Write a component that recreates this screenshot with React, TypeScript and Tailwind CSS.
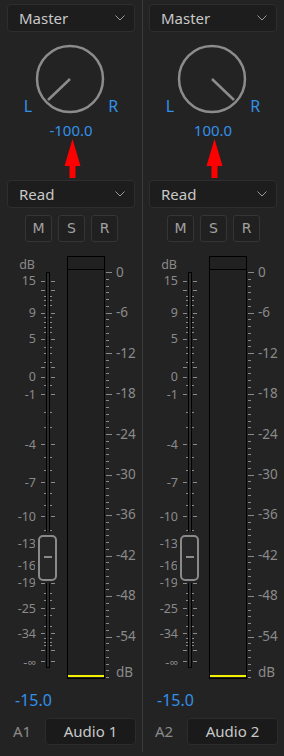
// Audio mixer strip — two channels side by side (Master / Read / meter / fader)

const FONT = { fontFamily: '"Noto Sans", "Open Sans", sans-serif' };

const LEFT_LABELS: [string, number][] = [
  ["15", 285], ["9", 317], ["5", 343], ["0", 381], ["-1", 399], ["-4", 449],
  ["-7", 487], ["-10", 521], ["-13", 548], ["-16", 570], ["-19", 587],
  ["-25", 613], ["-34", 638], ["-∞", 667],
];

const LEFT_LONG = [281, 290, 313, 339, 367, 377, 394, 444, 482, 516, 543, 566, 583, 608, 633, 650, 661];
const LEFT_SHORT = [
  296, 300, 305, 317, 322, 327, 332, 347, 353, 362, 385, 412, 427, 457, 470, 493,
  505, 530, 593, 600, 615, 626, 638, 642, 645,
];

const RIGHT_LABELS = ["0", "-6", "-12", "-18", "-24", "-30", "-36", "-42", "-48", "-54"];

type ChannelProps = {
  pan: string;
  panRight: boolean;
  volume: string;
  id: string;
  name: string;
  divider?: boolean;
};

function Chevron() {
  return (
    <svg width="10" height="6" viewBox="0 0 10 6" className="block">
      <polyline points="0.5,0.5 5,5 9.5,0.5" fill="none" stroke="#9a9a9a" strokeWidth="1" />
    </svg>
  );
}

function Dropdown({ label, className = "" }: { label: string; className?: string }) {
  return (
    <div
      className={`mx-[7px] flex h-[28px] items-center justify-between rounded-[4px] border border-[#2e2e2e] bg-[#1d1d1d] pl-[11px] pr-[9px] text-[15px] text-[#c8c8c8] ${className}`}
    >
      <span className="leading-none">{label}</span>
      <Chevron />
    </div>
  );
}

function Knob({ right }: { right: boolean }) {
  return (
    <div className="mt-[12px] flex items-end justify-center gap-[3px]">
      <span className="text-[16px] leading-[16px] text-[#3290ea]">L</span>
      <svg width="70" height="70" viewBox="0 0 70 70" className="block">
        <circle cx="35" cy="35" r="33" fill="none" stroke="#8c8c8c" strokeWidth="2.5" />
        <line
          x1="35"
          y1="35"
          x2={right ? 57 : 13}
          y2="56"
          stroke="#8c8c8c"
          strokeWidth="2.5"
        />
      </svg>
      <span className="text-[16px] leading-[16px] text-[#3290ea]">R</span>
    </div>
  );
}

function Meter() {
  const grey = "#8a8a8a";
  const dbY = (d: number) => 272 + d * 6.75;
  return (
    <svg width="142" height="432" viewBox="0 250 142 432" className="mt-[8px] block" style={FONT}>
      {/* fader track */}
      <rect x="46.5" y="272.5" width="3" height="395" fill="#2b2b2b" stroke="#000" />
      {LEFT_LONG.map((y) => (
        <g key={`l${y}`} fill={grey}>
          <rect x="41" y={y} width="4" height="1" />
          <rect x="51" y={y} width="4" height="1" />
        </g>
      ))}
      {LEFT_SHORT.map((y) => (
        <g key={`s${y}`} fill={grey}>
          <rect x="44" y={y} width="2" height="1" />
          <rect x="50" y={y} width="2" height="1" />
        </g>
      ))}
      <text x="35" y="269" textAnchor="end" fontSize="12.5" fill={grey}>
        dB
      </text>
      {LEFT_LABELS.map(([t, y]) => (
        <text key={t} x="36" y={y} textAnchor="end" fontSize="12.5" fill={grey}>
          {t}
        </text>
      ))}

      {/* level meter */}
      <rect x="67.5" y="256.5" width="37" height="422" fill="#212121" stroke="#000" />
      <line x1="67" y1="269.5" x2="105" y2="269.5" stroke="#000" />
      <rect x="68" y="675" width="36" height="2" fill="#f0f000" />

      {Array.from({ length: 61 }, (_, d) => (
        <rect
          key={`r${d}`}
          x="106"
          y={Math.round(dbY(d))}
          width={d % 6 === 0 && d < 60 ? 6 : 3}
          height="1"
          fill={grey}
        />
      ))}
      {RIGHT_LABELS.map((t, i) => (
        <text key={t} x="116" y={277 + i * 40.4} fontSize="13.5" fill={grey}>
          {t}
        </text>
      ))}
      <text x="116" y="677" fontSize="13.5" fill={grey}>
        dB
      </text>

      {/* fader thumb */}
      <rect x="35" y="532" width="25" height="51" fill="#232323" />
      <rect x="39" y="536" width="17" height="44" rx="4" fill="#262626" stroke={grey} strokeWidth="2" />
      <rect x="44" y="556" width="8" height="2" fill={grey} />
    </svg>
  );
}

function Channel({ pan, panRight, volume, id, name, divider }: ChannelProps) {
  return (
    <div
      className={`flex h-[752px] w-[142px] flex-col pt-[4px] ${divider ? "shadow-[inset_1px_0_0_#3a3a3a]" : ""}`}
    >
      <Dropdown label="Master" />
      <Knob right={panRight} />

      <div className="mt-[8px] text-center text-[15px] leading-[17px] text-[#3290ea]">{pan}</div>

      <svg width="142" height="40" viewBox="0 0 142 40" className="block">
        <polygon points="72.5,0 80.5,27 64.5,27" fill="#ff0000" />
        <rect x="69.5" y="26" width="6" height="13" fill="#ff0000" />
      </svg>

      <Dropdown label="Read" className="mt-[1px]" />

      <div className="mt-[7px] flex justify-center gap-[6px] pl-[1px]">
        {["M", "S", "R"].map((k) => (
          <div
            key={k}
            className="flex h-[27px] w-[27px] items-center justify-center rounded-[3px] border border-[#353535] bg-[#202020] text-[14px] text-[#a0a0a0] [font-family:'DejaVu_Sans',sans-serif]"
          >
            {k}
          </div>
        ))}
      </div>

      <Meter />

      <div className="mt-[8px] pl-[15px] text-[16px] leading-[20px] text-[#3290ea]">{volume}</div>

      <div className="mt-[8px] flex h-[27px] items-center pr-[6px]">
        <span className="pl-[13px] text-[15px] text-[#8a8a8a]">{id}</span>
        <div className="ml-auto flex h-[27px] w-[91px] items-center justify-center rounded-[4px] border border-[#2c2c2c] bg-[#1a1a1a] text-[15px] text-[#c8c8c8]">
          {name}
        </div>
      </div>
    </div>
  );
}

export default function App() {
  return (
    <div className="flex h-[756px] w-[284px] bg-[#232323]" style={FONT}>
      <Channel pan="-100.0" panRight={false} volume="-15.0" id="A1" name="Audio 1" />
      <Channel pan="100.0" panRight volume="-15.0" id="A2" name="Audio 2" divider />
    </div>
  );
}
